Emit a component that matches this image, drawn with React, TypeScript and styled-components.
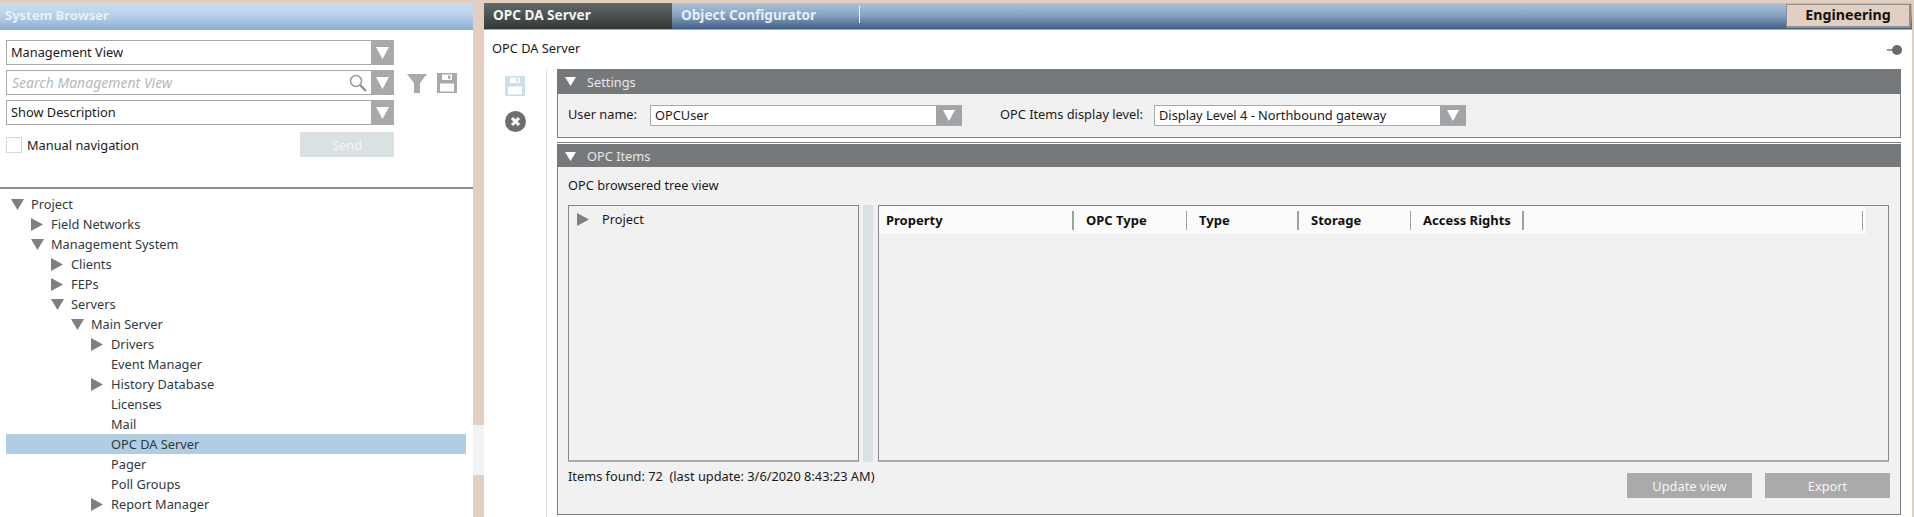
import React from "react";
import styled, { createGlobalStyle } from "styled-components";

const GlobalStyle = createGlobalStyle`
  html, body {
    margin: 0;
    padding: 0;
    background: #e3cfc0;
    overflow: hidden;
  }
  * { box-sizing: border-box; }
  body {
    font-family: "Noto Sans", "Open Sans", sans-serif;
    font-size: 12.8px;
    color: #1a1a1a;
  }
`;

const Shell = styled.div`
  display: flex;
  width: 1914px;
  height: 517px;
  padding: 3px 2px 0 0;
  background: #e3cfc0;
  overflow: hidden;
`;

/* ---- left: system browser ---- */

const BrowserPane = styled.section`
  display: flex;
  flex-direction: column;
  width: 473px;
  flex: none;
  background: #fff;
`;

const BrowserTitle = styled.header`
  height: 27px;
  padding: 0 5px;
  line-height: 25px;
  font-size: 13px;
  font-weight: 700;
  color: #e6f0f8;
  background: linear-gradient(#c9dff2 0%, #b9d2ea 45%, #8fb0d2 100%);
  border-bottom: 1px solid #a3a8ad;
`;

const Filters = styled.div`
  display: flex;
  flex-direction: column;
  gap: 5px;
  height: 159px;
  padding: 10px 0 0 6px;
  border-bottom: 2px solid #8f8f8f;
`;

const FilterRow = styled.div`
  display: flex;
  align-items: center;
`;

const Combo = styled.div<{ $width: number; $height?: number }>`
  display: flex;
  align-items: stretch;
  flex: none;
  width: ${(p) => p.$width}px;
  height: ${(p) => p.$height ?? 25}px;
  line-height: ${(p) => (p.$height ?? 25) - 2}px;
  background: #fff;
  border: 1px solid #a9a9a9;
  border-right: none;
`;

const ComboText = styled.div<{ $muted?: boolean }>`
  flex: 1;
  padding-left: ${(p) => (p.$muted ? 5 : 4)}px;
  white-space: nowrap;
  font-size: ${(p) => (p.$muted ? "14px" : "inherit")};
  font-style: ${(p) => (p.$muted ? "italic" : "normal")};
  color: ${(p) => (p.$muted ? "#b8b8b8" : "#1a1a1a")};
`;

const ComboArrow = styled.div<{ $width: number; $color?: string }>`
  display: flex;
  align-items: center;
  justify-content: center;
  flex: none;
  width: ${(p) => p.$width}px;
  background: ${(p) => p.$color ?? "#a9a9a9"};
`;

const SearchGlass = styled.svg`
  align-self: center;
  flex: none;
  margin-right: 4px;
`;

const FilterTools = styled.div`
  display: flex;
  align-items: center;
  gap: 10px;
  margin-left: 13px;
`;

const NavRow = styled.div`
  display: flex;
  align-items: center;
  width: 388px;
  height: 25px;
  margin-top: 2px;
`;

const CheckBox = styled.span`
  flex: none;
  width: 16px;
  height: 16px;
  background: #fff;
  border: 1px solid #d3d8dc;
`;

const CheckLabel = styled.span`
  flex: 1;
  margin-left: 5px;
`;

const FlatButton = styled.button<{ $tone: "pale" | "grey"; $width: number }>`
  flex: none;
  width: ${(p) => p.$width}px;
  height: 25px;
  padding: 0;
  border: none;
  font: inherit;
  color: ${(p) => (p.$tone === "pale" ? "#f3f6f7" : "#f5f5f5")};
  background: ${(p) => (p.$tone === "pale" ? "#d9e1e3" : "#aaaaaa")};
`;

const Tree = styled.div`
  flex: 1;
  padding: 5px 7px 0 6px;
  overflow: hidden;
`;

const TreeRow = styled.div<{ $level: number; $selected?: boolean }>`
  display: flex;
  align-items: center;
  height: 20px;
  padding-left: ${(p) => 5 + p.$level * 20}px;
  color: #2f3a40;
  white-space: nowrap;
  background: ${(p) => (p.$selected ? "#b0cde3" : "transparent")};
`;

const TreeToggle = styled.span`
  display: flex;
  align-items: center;
  flex: none;
  width: 20px;
  height: 20px;
`;

const ScrollGutter = styled.div`
  flex: none;
  width: 11px;
`;

const ScrollThumb = styled.div`
  width: 11px;
  height: 50px;
  margin-top: 422px;
  background: #f3f3f3;
`;

/* ---- right: workspace ---- */

const Workspace = styled.section`
  display: flex;
  flex: 1;
  flex-direction: column;
  min-width: 0;
  background: #fff;
`;

const TabBar = styled.nav`
  display: flex;
  align-items: stretch;
  flex: none;
  height: 27px;
  background: linear-gradient(#abc2d9 0%, #8aa5c2 45%, #3f5f86 100%);
  border-bottom: 1px solid #a2aab3;
`;

const Tab = styled.div<{ $active?: boolean }>`
  padding-left: 9px;
  width: ${(p) => (p.$active ? 188 : 187)}px;
  line-height: 24px;
  font-size: 13.6px;
  font-weight: 700;
  color: ${(p) => (p.$active ? "#f2f2f2" : "#e6eef6")};
  background: ${(p) => (p.$active ? "linear-gradient(#62696a, #333938)" : "transparent")};
`;

const TabDivider = styled.span`
  align-self: center;
  width: 1px;
  height: 17px;
  margin-top: -3px;
  background: #f0f4f8;
`;

const ModeButton = styled.div`
  width: 125px;
  height: 24px;
  margin: 1px 1px 0 auto;
  line-height: 20px;
  text-align: center;
  font-size: 14.2px;
  font-weight: 700;
  color: #111;
  background: #e3cfc0;
  border: 2px solid #8a8f94;
  border-width: 1px 2px 2px 1px;
`;

const TitleRow = styled.div`
  display: flex;
  align-items: center;
  justify-content: space-between;
  flex: none;
  height: 39px;
  padding: 0 9px 4px 8px;
`;

const PinIcon = styled.svg`
  margin-top: 4px;
`;

const WorkBody = styled.div`
  display: flex;
  flex: 1;
  min-height: 0;
`;

const ActionRail = styled.div`
  display: flex;
  flex-direction: column;
  align-items: center;
  flex: none;
  gap: 15px;
  width: 63px;
  padding: 7px 21px 0 21px;
  border-right: 1px solid #dedede;
`;

const Groups = styled.div`
  display: flex;
  flex-direction: column;
  width: 1344px;
  margin-left: 10px;
  gap: 4px;
  height: 446px;
`;

const Group = styled.div<{ $fill?: boolean }>`
  display: flex;
  flex-direction: column;
  flex: ${(p) => (p.$fill ? "1" : "none")};
  height: ${(p) => (p.$fill ? "auto" : "69px")};
  background: #f1f1f1;
  border: 1px solid #7d7f81;
  border-top: none;
`;

const GroupHeader = styled.div<{ $cap?: boolean }>`
  display: flex;
  align-items: center;
  flex: none;
  gap: 11px;
  height: 25px;
  margin: 0 -1px;
  padding-left: 8px;
  color: #e8e8e8;
  background: #75797c;
  ${(p) => (p.$cap ? "border-top: 1px solid #7d7f81; box-shadow: inset 0 1px 0 #fff; padding-top: 2px;" : "")}
`;

const SettingsBody = styled.div`
  display: flex;
  align-items: center;
  height: 42px;
  padding: 0 0 0 10px;
`;

const FieldLabel = styled.span<{ $width: number; $gap?: number }>`
  flex: none;
  width: ${(p) => p.$width}px;
  margin-left: ${(p) => p.$gap ?? 0}px;
  margin-top: -2px;
  white-space: nowrap;
`;

const ItemsBody = styled.div`
  display: flex;
  flex: 1;
  flex-direction: column;
  padding: 0 11px 0 10px;
`;

const Caption = styled.div`
  height: 38px;
  line-height: 36px;
`;

const Panes = styled.div`
  display: flex;
  height: 257px;
`;

const PaneBox = styled.div`
  background: #f1f1f1;
  border: 1px solid #85878a;
  border-bottom: 2px solid #a9abad;
  border-radius: 1px;
`;

const OpcTree = styled(PaneBox)`
  display: flex;
  align-items: flex-start;
  flex: none;
  width: 291px;
  padding: 3px 0 0 8px;
`;

const OpcTreeRow = styled.div`
  display: flex;
  align-items: center;
  height: 20px;
  gap: 13px;
`;

const Splitter = styled.div`
  flex: none;
  width: 10px;
  margin: 0 5px 0 4px;
  background: #d9e1e3;
`;

const Grid = styled(PaneBox)`
  flex: 1;
  padding-top: 1px;
`;

const GridHeader = styled.div`
  display: flex;
  align-items: center;
  width: 987px;
  height: 27px;
  background: #fbfbfb;
`;

const GridColumn = styled.div<{ $width: number; $heavy?: boolean }>`
  flex: none;
  width: ${(p) => p.$width}px;
  height: 19px;
  padding-left: ${(p) => (p.$width > 150 ? 7 : 12)}px;
  line-height: 18px;
  font-size: 13px;
  font-weight: 700;
  color: #111;
  white-space: nowrap;
  border-right: ${(p) => (p.$heavy ? 2 : 1)}px solid #a0a0a0;
`;

const Footer = styled.div`
  display: flex;
  justify-content: space-between;
  padding-top: 11px;
`;

const FooterText = styled.div`
  line-height: 18px;
  margin-top: -6px;
`;

const FooterButtons = styled.div`
  display: flex;
  gap: 13px;
  margin-right: -1px;
`;

/* ---- drawings ---- */

const Caret = ({ dir, w, h, color }: { dir: "down" | "right"; w: number; h: number; color: string }) => (
  <svg width={w} height={h} viewBox={`0 0 ${w} ${h}`}>
    <polygon points={dir === "down" ? `0,0 ${w},0 ${w / 2},${h}` : `0,0 ${w},${h / 2} 0,${h}`} fill={color} />
  </svg>
);

const Floppy = ({ color, size }: { color: string; size: number }) => (
  <svg width={size} height={size} viewBox="0 0 20 20">
    <path
      fillRule="evenodd"
      fill={color}
      d="M0 0H20V20H0ZM5 1.5V7H15V1.5ZM11 2.5H13.5V6H11ZM3 10.5V18.5H17V10.5Z"
    />
  </svg>
);

const TreeItems: { label: string; level: number; toggle?: "down" | "right"; selected?: boolean }[] = [
  { label: "Project", level: 0, toggle: "down" },
  { label: "Field Networks", level: 1, toggle: "right" },
  { label: "Management System", level: 1, toggle: "down" },
  { label: "Clients", level: 2, toggle: "right" },
  { label: "FEPs", level: 2, toggle: "right" },
  { label: "Servers", level: 2, toggle: "down" },
  { label: "Main Server", level: 3, toggle: "down" },
  { label: "Drivers", level: 4, toggle: "right" },
  { label: "Event Manager", level: 4 },
  { label: "History Database", level: 4, toggle: "right" },
  { label: "Licenses", level: 4 },
  { label: "Mail", level: 4 },
  { label: "OPC DA Server", level: 4, selected: true },
  { label: "Pager", level: 4 },
  { label: "Poll Groups", level: 4 },
  { label: "Report Manager", level: 4, toggle: "right" },
];

const Columns = [
  { label: "Property", width: 195, heavy: true },
  { label: "OPC Type", width: 113 },
  { label: "Type", width: 112, heavy: true },
  { label: "Storage", width: 112 },
  { label: "Access Rights", width: 113, heavy: true },
  { label: "", width: 339 },
];

export default function App() {
  return (
    <>
      <GlobalStyle />
      <Shell>
        <BrowserPane>
          <BrowserTitle>System Browser</BrowserTitle>
          <Filters>
            <FilterRow>
              <Combo $width={388}>
                <ComboText>Management View</ComboText>
                <ComboArrow $width={23}>
                  <Caret dir="down" w={13} h={12} color="#fff" />
                </ComboArrow>
              </Combo>
            </FilterRow>
            <FilterRow>
              <Combo $width={388}>
                <ComboText $muted>Search Management View</ComboText>
                <SearchGlass width="18" height="18" viewBox="0 0 18 18">
                  <circle cx="7" cy="7" r="5.5" fill="none" stroke="#9a9a9a" strokeWidth="1.5" />
                  <line x1="11" y1="11" x2="17" y2="17" stroke="#8a8a8a" strokeWidth="2.2" />
                </SearchGlass>
                <ComboArrow $width={23}>
                  <Caret dir="down" w={13} h={12} color="#fff" />
                </ComboArrow>
              </Combo>
              <FilterTools>
                <svg width="20" height="20" viewBox="0 0 20 20">
                  <path d="M0 1H20L13 10V20H7V10Z" fill="#a9a9a9" />
                </svg>
                <Floppy color="#a9a9a9" size={20} />
              </FilterTools>
            </FilterRow>
            <FilterRow>
              <Combo $width={388}>
                <ComboText>Show Description</ComboText>
                <ComboArrow $width={23}>
                  <Caret dir="down" w={13} h={12} color="#fff" />
                </ComboArrow>
              </Combo>
            </FilterRow>
            <NavRow>
              <CheckBox />
              <CheckLabel>Manual navigation</CheckLabel>
              <FlatButton $tone="pale" $width={94}>Send</FlatButton>
            </NavRow>
          </Filters>
          <Tree>
            {TreeItems.map((item) => (
              <TreeRow key={item.label} $level={item.level} $selected={item.selected}>
                <TreeToggle>
                  {item.toggle === "down" && <Caret dir="down" w={13} h={11} color="#808080" />}
                  {item.toggle === "right" && <Caret dir="right" w={12} h={13} color="#808080" />}
                </TreeToggle>
                {item.label}
              </TreeRow>
            ))}
          </Tree>
        </BrowserPane>
        <ScrollGutter>
          <ScrollThumb />
        </ScrollGutter>
        <Workspace>
          <TabBar>
            <Tab $active>OPC DA Server</Tab>
            <Tab>Object Configurator</Tab>
            <TabDivider />
            <ModeButton>Engineering</ModeButton>
          </TabBar>
          <TitleRow>
            OPC DA Server
            <PinIcon width="16" height="12" viewBox="0 0 16 12">
              <line x1="0" y1="6" x2="6" y2="6" stroke="#666b6e" strokeWidth="1.4" />
              <circle cx="10" cy="6" r="5" fill="#666b6e" />
            </PinIcon>
          </TitleRow>
          <WorkBody>
            <ActionRail>
              <Floppy color="#c9e0ea" size={20} />
              <svg width="21" height="21" viewBox="0 0 21 21">
                <circle cx="10.5" cy="10.5" r="10.5" fill="#6e6e6e" />
                <path d="M7 7L14 14M14 7L7 14" stroke="#fff" strokeWidth="3" />
              </svg>
            </ActionRail>
            <Groups>
              <Group>
                <GroupHeader>
                  <Caret dir="down" w={11} h={9} color="#fff" />
                  Settings
                </GroupHeader>
                <SettingsBody>
                  <FieldLabel $width={82}>User name:</FieldLabel>
                  <Combo $width={312} $height={21}>
                    <ComboText>OPCUser</ComboText>
                    <ComboArrow $width={26} $color="#a0a4a6">
                      <Caret dir="down" w={12} h={11} color="#fff" />
                    </ComboArrow>
                  </Combo>
                  <FieldLabel $width={154} $gap={38}>OPC Items display level:</FieldLabel>
                  <Combo $width={312} $height={21}>
                    <ComboText>Display Level 4 - Northbound gateway</ComboText>
                    <ComboArrow $width={26} $color="#a0a4a6">
                      <Caret dir="down" w={12} h={11} color="#fff" />
                    </ComboArrow>
                  </Combo>
                </SettingsBody>
              </Group>
              <Group $fill>
                <GroupHeader $cap>
                  <Caret dir="down" w={11} h={9} color="#fff" />
                  OPC Items
                </GroupHeader>
                <ItemsBody>
                  <Caption>OPC browsered tree view</Caption>
                  <Panes>
                    <OpcTree>
                      <OpcTreeRow>
                        <Caret dir="right" w={12} h={13} color="#808080" />
                        Project
                      </OpcTreeRow>
                    </OpcTree>
                    <Splitter />
                    <Grid>
                      <GridHeader>
                        {Columns.map((c) => (
                          <GridColumn key={c.label} $width={c.width} $heavy={c.heavy}>
                            {c.label}
                          </GridColumn>
                        ))}
                      </GridHeader>
                    </Grid>
                  </Panes>
                  <Footer>
                    <FooterText>Items found: 72&nbsp; (last update: 3/6/2020 8:43:23 AM)</FooterText>
                    <FooterButtons>
                      <FlatButton $tone="grey" $width={125}>Update view</FlatButton>
                      <FlatButton $tone="grey" $width={125}>Export</FlatButton>
                    </FooterButtons>
                  </Footer>
                </ItemsBody>
              </Group>
            </Groups>
          </WorkBody>
        </Workspace>
      </Shell>
    </>
  );
}
